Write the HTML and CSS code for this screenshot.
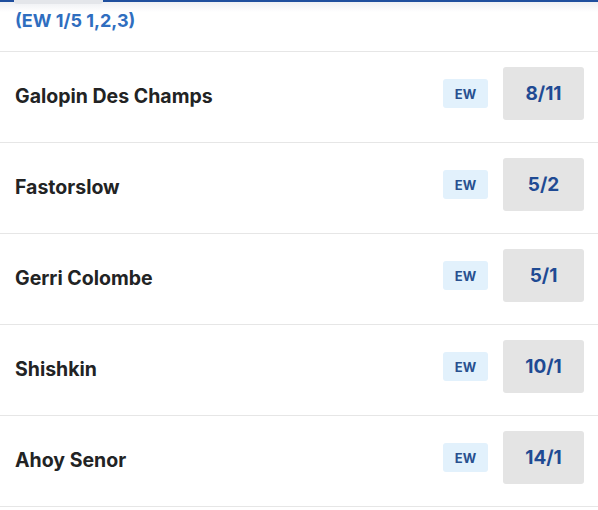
FILE: index.html
```html
<!DOCTYPE html>
<html>
<head>
<meta charset="utf-8">
<link rel="stylesheet" href="styles.css">
</head>
<body>
<div class="topbar">
  <div class="bar-left"></div>
  <div class="tab"></div>
  <div class="bar-right"></div>
</div>
<div class="shadow"></div>
<div class="terms">(EW 1/5 1,2,3)</div>
<div class="list">
  <div class="row"><div class="name">Galopin Des Champs</div><div class="ew">EW</div><div class="odds">8/11</div></div>
  <div class="row"><div class="name">Fastorslow</div><div class="ew">EW</div><div class="odds">5/2</div></div>
  <div class="row"><div class="name">Gerri Colombe</div><div class="ew">EW</div><div class="odds">5/1</div></div>
  <div class="row"><div class="name">Shishkin</div><div class="ew">EW</div><div class="odds">10/1</div></div>
  <div class="row"><div class="name">Ahoy Senor</div><div class="ew">EW</div><div class="odds">14/1</div></div>
</div>
</body>
</html>
```
FILE: styles.css
```css
html, body {
  margin: 0;
  padding: 0;
  background: #fff;
  font-family: Inter, "Liberation Sans", sans-serif;
  overflow: hidden;
}
.topbar {
  display: flex;
  height: 2px;
}
.bar-left { width: 14px; background: #1f4f9e; }
.tab { width: 89px; background: #e4e6ea; height: 4px; border-radius: 0 0 3px 3px; }
.bar-right { flex: 1; background: #1f4f9e; }
.shadow {
  height: 10px;
  background: linear-gradient(#eef0f3, #fff);
}
.terms {
  height: 50px;
  box-sizing: border-box;
  margin-top: -10px;
  padding: 8px 0 0 15px;
  line-height: 22px;
  font-size: 18px;
  font-weight: 700;
  color: #2f6ebf;
  border-bottom: 1px solid #e6e6e6;
}
.row {
  display: flex;
  align-items: center;
  height: 91px;
  box-sizing: border-box;
  border-bottom: 1px solid #e6e6e6;
  padding: 0 14px 7px 15px;
}
.name {
  flex: 1;
  padding-top: 4px;
  font-size: 19.5px;
  font-weight: 700;
  color: #222324;
}
.ew {
  width: 45px;
  height: 29px;
  border-radius: 3px;
  background: #e2f1fc;
  color: #28508f;
  font-size: 13px;
  font-weight: 700;
  display: flex;
  align-items: center;
  justify-content: center;
  margin-right: 15px;
}
.odds {
  width: 81px;
  height: 53px;
  border-radius: 3px;
  background: #e4e4e4;
  color: #1f4a93;
  font-size: 19px;
  font-weight: 700;
  display: flex;
  align-items: center;
  justify-content: center;
}
```
